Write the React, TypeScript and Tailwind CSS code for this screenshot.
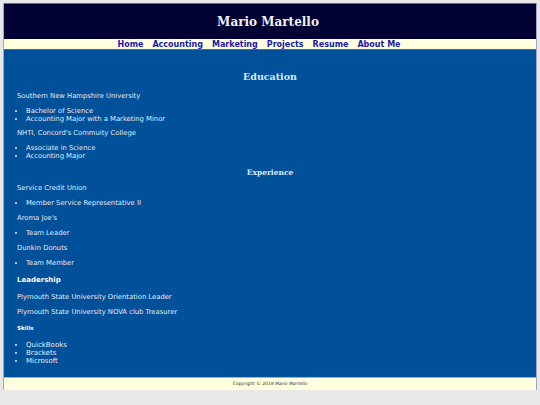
import React from 'react';

const sans = "font-['DejaVu_Sans',Verdana,sans-serif]";
const serif = "font-['DejaVu_Serif',Georgia,serif]";

const Bullets: React.FC<{ items: string[]; className?: string }> = ({ items, className = '' }) => (
    <ul className={`list-disc pl-[9px] ${className}`}>
        {items.map((t) => (
            <li key={t}>{t}</li>
        ))}
    </ul>
);

const App: React.FC = () => {
    return (
        <div className={`min-h-[405px] bg-[#e8e8e8] pt-[3px] pb-[15px] ${sans}`}>
            <div className="mx-[3px] w-[534px] border-x border-[#9aa6c4]">
                <header className="h-[36px] bg-[#000033] border-t border-[#6a6a8a] flex items-center justify-center">
                    <h1 className={`${serif} text-[12px] font-bold text-[#f2f2f2] pt-[1px] pr-[4px]`}>Mario Martello</h1>
                </header>
                <nav className="h-[10px] bg-[#ffffe0] flex justify-center gap-[9px] text-[8px] leading-[11px] font-bold text-[#1a1aaa] pr-[22px]">
                    <a href="#">Home</a>
                    <a href="#">Accounting</a>
                    <a href="#">Marketing</a>
                    <a href="#">Projects</a>
                    <a href="#">Resume</a>
                    <a href="#">About Me</a>
                </nav>
                <main className="bg-[#00509a] border-t border-[#3a6ea8] text-[#e4ecf6] text-[6.8px] leading-[8px] px-[13px] pt-[23px] pb-[12px] h-[328px]">
                    <h2 className={`${serif} text-center text-[9.5px] font-bold text-[#dceaff] mb-[11px]`}>Education</h2>
                    <p className="mb-[7px]">Southern New Hampshire University</p>
                    <Bullets items={['Bachelor of Science', 'Accounting Major with a Marketing Minor']} className="mb-[6px]" />
                    <p className="mb-[7px]">NHTI, Concord's Commuity College</p>
                    <Bullets items={['Associate in Science', 'Accounting Major']} className="mb-[9px]" />
                    <h3 className={`${serif} text-center text-[7.5px] font-bold text-[#dceaff] mb-[7px]`}>Experience</h3>
                    <p className="mb-[7px]">Service Credit Union</p>
                    <Bullets items={['Member Service Representative II']} className="mb-[7px]" />
                    <p className="mb-[7px]">Aroma Joe's</p>
                    <Bullets items={['Team Leader']} className="mb-[7px]" />
                    <p className="mb-[7px]">Dunkin Donuts</p>
                    <Bullets items={['Team Member']} className="mb-[9px]" />
                    <h4 className="text-[7px] font-bold text-white mb-[9px]">Leadership</h4>
                    <p className="mb-[7px]">Plymouth State University Orientation Leader</p>
                    <p className="mb-[8px]">Plymouth State University NOVA club Treasurer</p>
                    <h5 className="text-[5.5px] font-bold text-white mb-[9px]">Skills</h5>
                    <Bullets items={['QuickBooks', 'Brackets', 'Microsoft']} className="text-[7px]" />
                </main>
                <footer className="h-[13px] bg-[#ffffe0] border-t border-[#9ab0c8] flex items-center justify-center text-[4.5px] italic text-[#333]">
                    Copyright © 2018 Mario Martello
                </footer>
            </div>
        </div>
    );
};

export default App;
